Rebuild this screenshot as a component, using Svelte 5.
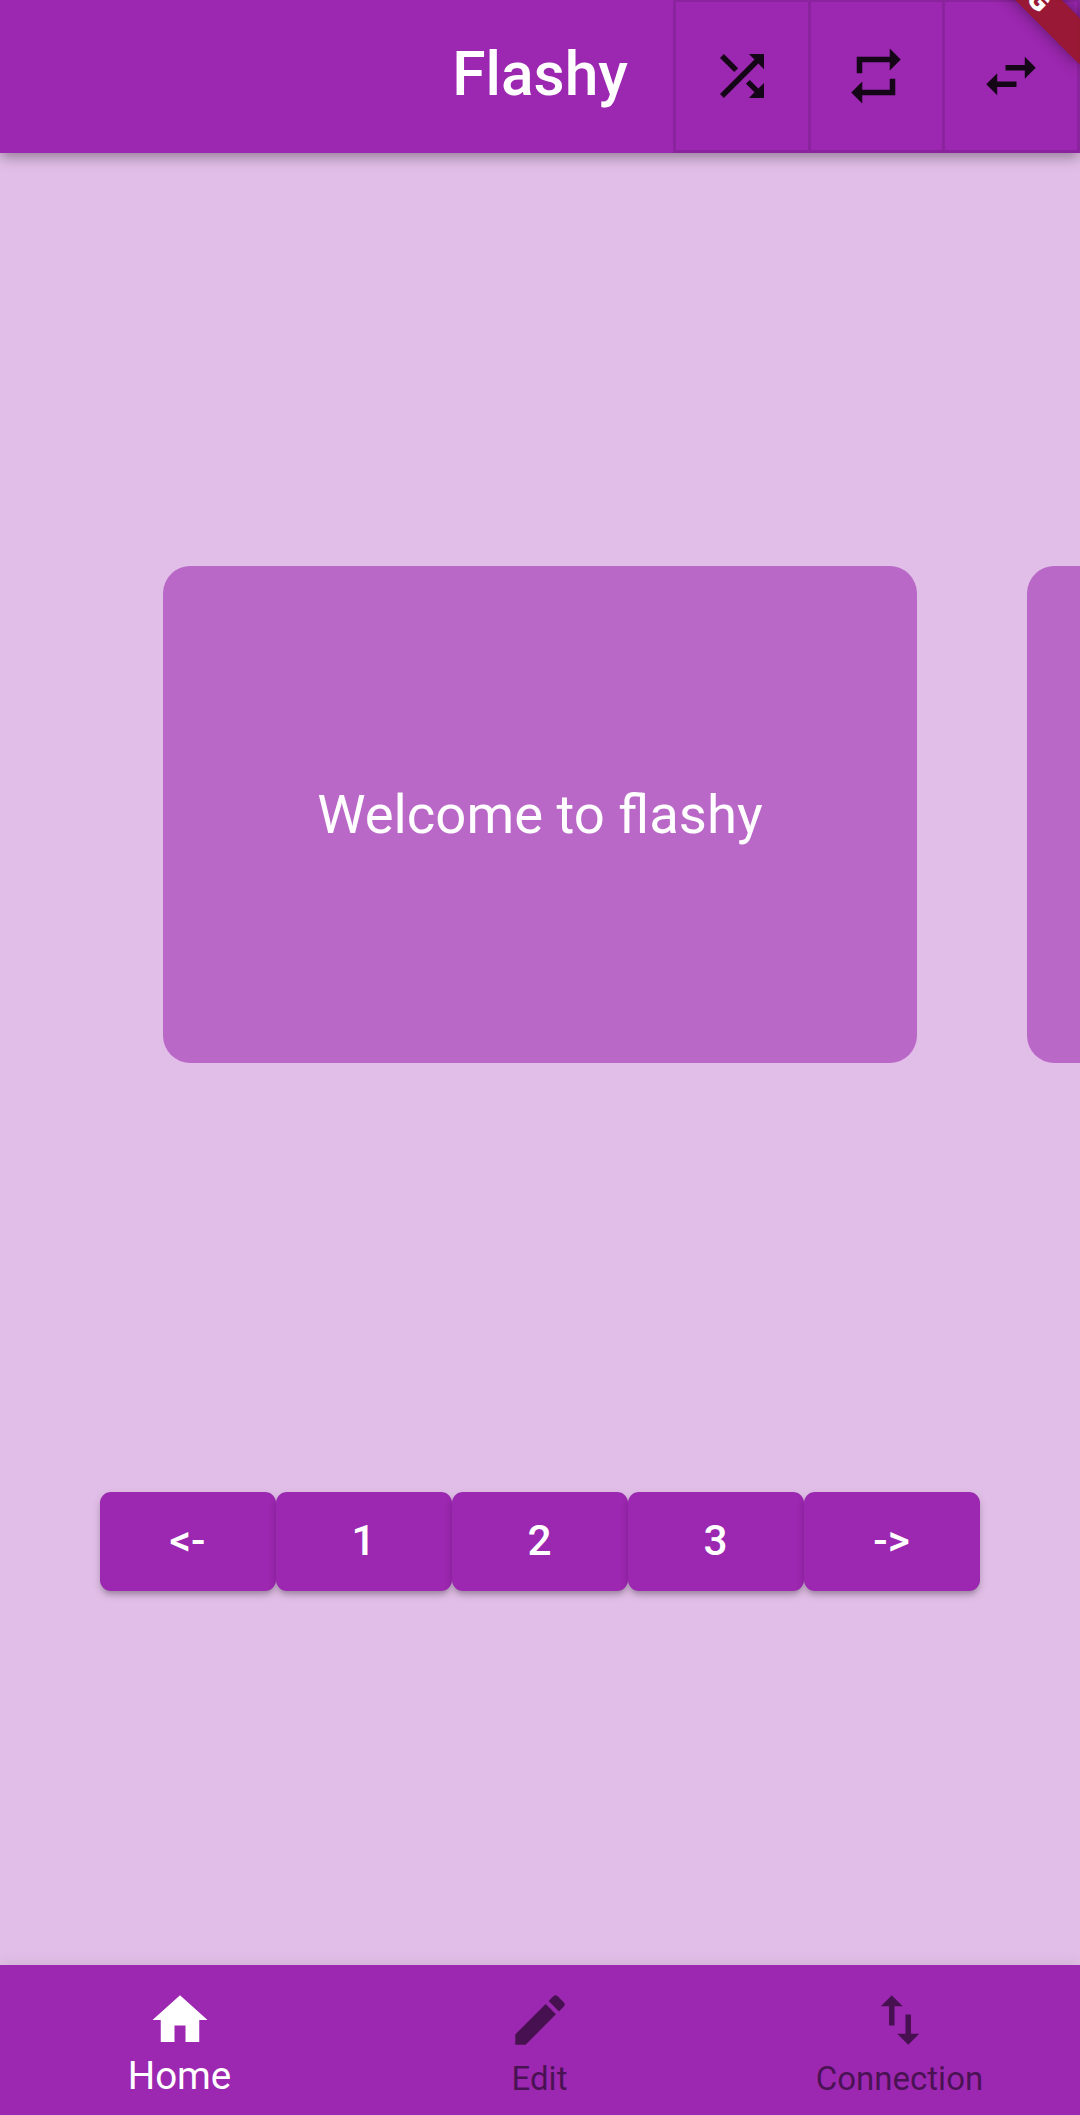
<script>
  const actions = [
    {
      label: 'Shuffle',
      path: 'M10.59 9.17 5.41 4 4 5.41l5.17 5.17 1.42-1.41zM14.5 4l2.04 2.04L4 18.59 5.41 20 17.96 7.46 20 9.5V4h-5.5zm.33 9.41-1.41 1.41 3.13 3.13L14.5 20H20v-5.5l-2.04 2.04-3.13-3.13z'
    },
    { label: 'Repeat', path: 'M7 7h10v3l4-4-4-4v3H5v6h2V7zm10 10H7v-3l-4 4 4 4v-3h12v-6h-2v4z' },
    { label: 'Swap', path: 'M6.99 11 3 15l3.99 4v-3H14v-2H6.99v-3zM21 9l-3.99-4v3H10v2h7.01v3L21 9z' }
  ];
  const tabs = [
    { label: 'Home', path: 'M10 20v-6h4v6h5v-8h3L12 3 2 12h3v8z' },
    {
      label: 'Edit',
      path: 'M3 17.25V21h3.75L17.81 9.94l-3.75-3.75L3 17.25zM20.71 7.04c.39-.39.39-1.02 0-1.41l-2.34-2.34c-.39-.39-1.02-.39-1.41 0l-1.83 1.83 3.75 3.75 1.83-1.83z'
    },
    { label: 'Connection', path: 'M16 17.01V10h-2v7.01h-3L15 21l4-3.99h-3zM9 3 5 6.99h3V14h2V6.99h3L9 3z' }
  ];
  const pages = ['<-', '1', '2', '3', '->'];
  let active = $state('Home');
</script>

<div class="app">
  <header>
    <h1>Flashy</h1>
    <div class="actions">
      {#each actions as action}
        <button aria-label={action.label}>
          <svg viewBox="0 0 24 24"><path d={action.path} /></svg>
        </button>
      {/each}
    </div>
    <div class="ribbon"><span>DEBUG</span></div>
  </header>

  <main>
    <section class="deck">
      <article class="card">Welcome to flashy</article>
      <article class="card"></article>
    </section>
    <div class="pager">
      {#each pages as page}
        <button>{page}</button>
      {/each}
    </div>
  </main>

  <nav>
    {#each tabs as tab}
      <button class:active={active === tab.label} onclick={() => (active = tab.label)}>
        <svg viewBox="0 0 24 24"><path d={tab.path} /></svg>
        <span>{tab.label}</span>
      </button>
    {/each}
  </nav>
</div>

<style>
  :global(body) {
    margin: 0;
  }
  .app {
    display: flex;
    flex-direction: column;
    width: 1080px;
    height: 2115px;
    overflow: hidden;
    background: #e1bee7;
    color: #fff;
    font-family: Roboto, sans-serif;
  }
  button {
    margin: 0;
    padding: 0;
    border: 0;
    font: inherit;
    color: inherit;
    background: none;
  }
  svg {
    display: block;
    width: 66px;
    height: 66px;
    fill: currentColor;
  }
  header {
    position: relative;
    z-index: 1;
    flex: none;
    display: flex;
    justify-content: flex-end;
    height: 153px;
    background: #9c27b0;
    box-shadow:
      0 5px 10px -2px rgba(0, 0, 0, 0.2),
      0 6px 14px 0 rgba(0, 0, 0, 0.16);
    clip-path: inset(0 0 -60px 0);
  }
  h1 {
    margin: 0 45px 0 0;
    font-size: 60.5px;
    line-height: 150px;
    font-weight: 500;
  }
  .actions {
    box-sizing: border-box;
    display: grid;
    grid-template-columns: repeat(3, 1fr);
    gap: 2.75px;
    width: 407px;
    padding: 2px 3px 3px;
    background: #8c239e;
  }
  .actions button {
    display: grid;
    place-items: center;
    background: #9c27b0;
    color: rgba(0, 0, 0, 0.87);
  }
  .ribbon {
    position: absolute;
    left: 903px;
    top: -42.5px;
    width: 220px;
    height: 33px;
    transform: rotate(45deg);
    background: rgba(153, 23, 35, 0.88);
    box-shadow: 0 0 16px rgba(0, 0, 0, 0.42);
    font-size: 29px;
    line-height: 33px;
    font-weight: 900;
    text-align: center;
  }
  main {
    flex: 1;
    display: flex;
    flex-direction: column;
    align-items: center;
  }
  .deck {
    display: flex;
    gap: 110px;
    width: 754px;
    margin-top: 413px;
  }
  .card {
    flex: 0 0 754px;
    height: 497.4px;
    border-radius: 27.5px;
    background: #ba68c8;
    font-size: 54.45px;
    line-height: 497px;
    text-align: center;
  }
  .pager {
    display: flex;
    width: 880px;
    margin-top: 428.6px;
  }
  .pager button {
    flex: 1;
    height: 99px;
    padding: 0 1px 2px 0;
    border-radius: 11px;
    background: #9c27b0;
    font-size: 42.35px;
    font-weight: 500;
    box-shadow:
      0 5px 5px -2px rgba(0, 0, 0, 0.18),
      0 4px 8px 0 rgba(0, 0, 0, 0.16);
  }
  nav {
    flex: none;
    display: grid;
    grid-template-columns: repeat(3, 1fr);
    height: 150px;
    background: #9c27b0;
    box-shadow: 0 0 14px rgba(0, 0, 0, 0.1);
  }
  nav button {
    display: flex;
    flex-direction: column;
    align-items: center;
    padding-top: 22px;
    color: rgba(0, 0, 0, 0.54);
    font-size: 33px;
    line-height: 52px;
  }
  nav span {
    margin-right: 1px;
  }
  nav button.active {
    color: #fff;
    font-size: 38.5px;
    line-height: 45px;
  }
</style>
